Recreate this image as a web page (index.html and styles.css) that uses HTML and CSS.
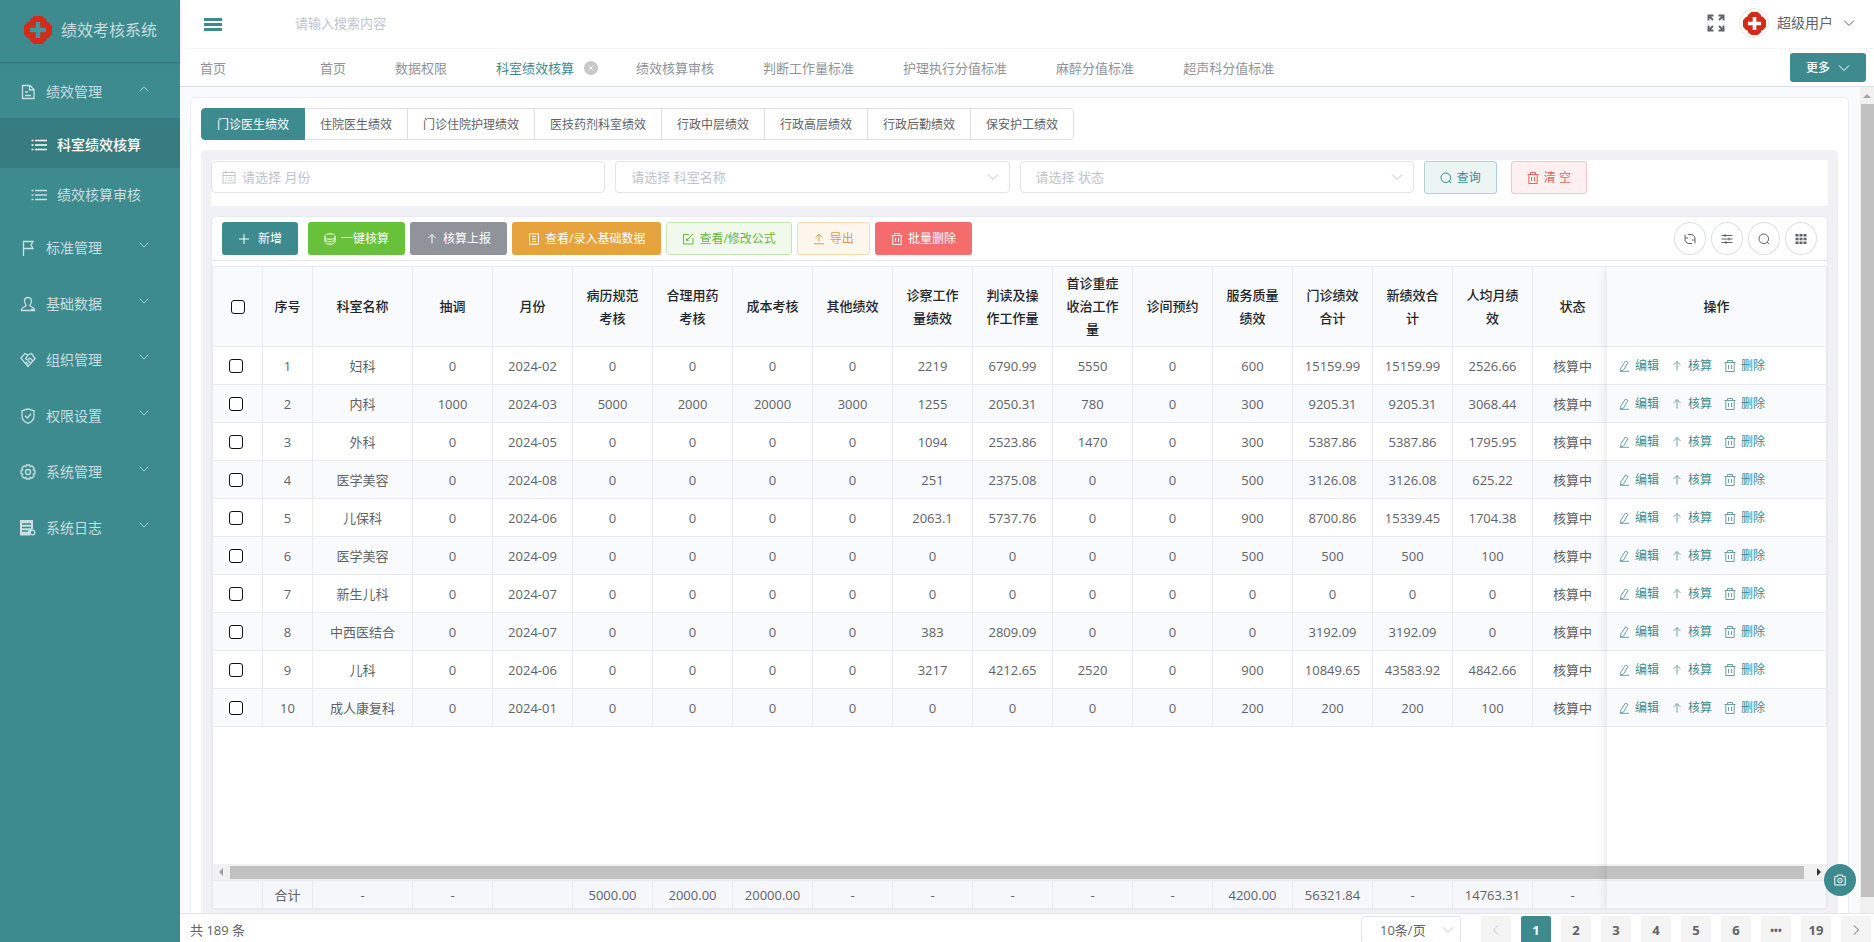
FILE: index.html
```html
<!DOCTYPE html>
<html lang="zh-CN">
<head>
<meta charset="utf-8">
<title>绩效考核系统</title>
<link rel="stylesheet" href="styles.css">
</head>
<body>
<svg class="sprite" aria-hidden="true">
  <symbol id="i-logo" viewBox="0 0 28 28"><path fill="#d42a17" d="M10 0h8l4 3.500.3 2.200 2.200.3L28 10v8l-3.500 4-2.200.3-.3 2.200L18 28h-8l-4-3.500-.3-2.200-2.200-.3L0 18v-8l3.500-4 2.200-.3.3-2.200z"/><path fill="none" stroke="#a8382b" d="M5.500 5.500l4 4M22.500 5.500l-4 4M5.500 22.500l4-4M22.500 22.500l-4-4"/><path class="cross" d="M11.800 6h4.400v5.800H22v4.400h-5.800V22h-4.400v-5.800H6v-4.400h5.800z"/></symbol>
  <symbol id="i-down" viewBox="0 0 12 12"><path d="M1 3.500l5 5 5-5"/></symbol>
  <symbol id="i-up" viewBox="0 0 12 12"><path d="M1 8.500l5-5 5 5"/></symbol>
  <symbol id="i-left" viewBox="0 0 12 12"><path d="M8 1.500L3.500 6 8 10.500"/></symbol>
  <symbol id="i-right" viewBox="0 0 12 12"><path d="M4 1.500L8.500 6 4 10.500"/></symbol>
  <symbol id="i-doc" viewBox="0 0 16 16"><path d="M2.500 1.500h7.500l4 4v9H2.500zM9.500 1.500V6H14M5 8h3M5 11.500h6"/></symbol>
  <symbol id="i-list" viewBox="0 0 16 12"><path d="M4 1.500h12M4 6h12M4 10.500h12M.500 1.500h2M.500 6h2M.500 10.500h2"/></symbol>
  <symbol id="i-flag" viewBox="0 0 16 16"><path d="M3.500 16V1.500H13L11 5l2 3.500H3.500"/></symbol>
  <symbol id="i-user" viewBox="0 0 16 16"><path d="M8 1.500c-2.200 0-3.500 1.500-3.500 3.500 0 1.800 1 2.800 1.500 4 .3 1-.5 1.500-2 2-1.700.6-2.500 1.200-2.500 3.500h13c0-2.300-.8-2.900-2.500-3.500-1.500-.5-2.300-1-2-2 .5-1.200 1.500-2.200 1.500-4 0-2-1.300-3.500-3.500-3.500zM11 13.500h3"/></symbol>
  <symbol id="i-org" viewBox="0 0 16 16"><path d="M8 3L5 1.500.800 6 8 14.500 15.200 6.500 11.500 1.500 8 3 5.500 6.500l2 1.500L10 6l3 3M6 10l2 2M8 8.500l2.500 2.500"/></symbol>
  <symbol id="i-shield" viewBox="0 0 16 16"><path d="M8 .800l6 2V8c0 3.500-2.500 6-6 7.400C4.500 14 2 11.500 2 8V2.800zM5 7.800L7.300 10 11 5.800"/></symbol>
  <symbol id="i-gear" viewBox="0 0 16 16"><path d="M6.500 1h3l.6 1.700 1.800-.8 2.200 2.200-.8 1.800 1.700.6v3l-1.700.6.8 1.800-2.200 2.200-1.800-.8L9.500 15h-3l-.6-1.700-1.800.8-2.200-2.200.8-1.800L1 9.500v-3l1.700-.6-.8-1.800 2.200-2.200 1.800.8z"/><circle cx="8" cy="8" r="2.500"/></symbol>
  <symbol id="i-log" viewBox="0 0 16 16"><path fill="currentColor" stroke="none" d="M0 0h13v9l-3 2v4.500H0z"/><path class="log-lines" d="M2 4h9M2 7.500h9M2 11h6"/><circle cx="12.500" cy="12.500" r="2.300"/></symbol>
  <symbol id="i-full" viewBox="0 0 18 18"><path d="M1.500 6.500v-5h5M2 2l4 4M11.500 1.500h5v5M16 2l-4 4M1.500 11.500v5h5M2 16l4-4M16.500 11.500v5h-5M16 16l-4-4"/></symbol>
  <symbol id="i-cal" viewBox="0 0 14 14"><path d="M1 2.500h12v10.500H1zM1 5.500h12M4 .5v3M10 .5v3M3.500 8h1.500M6.300 8h1.500M9 8h1.500M3.500 10.500h1.500M6.300 10.500h1.500M9 10.500h1.500"/></symbol>
  <symbol id="i-search" viewBox="0 0 12 12"><circle cx="5.800" cy="5.800" r="4.800"/><path d="M9.200 9.200L11 11"/></symbol>
  <symbol id="i-trash" viewBox="0 0 12 12"><path d="M.5 2.500h11M3.500 2.500v-2h5v2M1.800 2.500v9h8.400v-9M4.500 5v4M7.500 5v4"/></symbol>
  <symbol id="i-plus" viewBox="0 0 12 12"><path d="M6 1v10M1 6h10"/></symbol>
  <symbol id="i-coin" viewBox="0 0 12 12"><ellipse cx="6" cy="3.500" rx="5" ry="2.700"/><path d="M1 3.500v5c0 1.500 2 2.700 5 2.700s5-1.200 5-2.700v-5M1 6c0 1.500 2 2.700 5 2.700S11 7.500 11 6"/></symbol>
  <symbol id="i-top" viewBox="0 0 12 12"><path d="M6 10.500v-9M2.500 5L6 1.500 9.500 5"/></symbol>
  <symbol id="i-sheet" viewBox="0 0 12 12"><path d="M1.500.800h9v10.400h-9zM4 3.500h4M4 6h4M4 8.500h4"/></symbol>
  <symbol id="i-edit" viewBox="0 0 12 12"><path d="M7 1.500H1.500v9.500H11V5M4.500 7.500L11 1M4.500 5.500v2h2"/></symbol>
  <symbol id="i-upload" viewBox="0 0 12 12"><path d="M6 8.500V1.500M2.500 4.500L6 1.200l3.500 3.300M1 10.800h10"/></symbol>
  <symbol id="i-pen" viewBox="0 0 12 12"><path d="M7.500 1l2.500 1.500-4.500 7.500-3 1 .3-3zM2 11.300h9"/></symbol>
  <symbol id="i-refresh" viewBox="0 0 12 12"><path d="M4 1.500h3A4 4 0 0 1 10.800 7M8 10.500H5A4 4 0 0 1 1.200 5M1 1.500v3.500h3M11 10.500V7H8"/></symbol>
  <symbol id="i-tune" viewBox="0 0 12 12"><path d="M.5 2.500h11M.5 6h11M.5 9.500h11M4 1v3M8 4.500v3M5 8v3"/></symbol>
  <symbol id="i-grid" viewBox="0 0 12 12"><path fill="currentColor" stroke="none" d="M.5 1h3v2.500h-3zM4.500 1h3v2.500h-3zM8.500 1h3v2.500h-3zM.5 4.700h3v2.500h-3zM4.500 4.700h3v2.500h-3zM8.500 4.700h3v2.500h-3zM.5 8.400h3v2.500h-3zM4.500 8.400h3v2.500h-3zM8.500 8.400h3v2.500h-3z"/></symbol>
  <symbol id="i-camera" viewBox="0 0 12 12"><path d="M.8 2.500h2.700v-1.500h5v1.500h2.700v8.500H.8z"/><circle cx="6" cy="6.500" r="2.300"/><path d="M6 6v1"/></symbol>
</svg>

<div class="app">
  <aside class="sidebar">
    <div class="brand"><svg class="brand-logo"><use href="#i-logo"/></svg><span>绩效考核系统</span></div>
    <nav class="menu">
      <a class="item" href="#"><svg class="ic16"><use href="#i-doc"/></svg><span>绩效管理</span><svg class="arrow"><use href="#i-up"/></svg></a>
      <a class="item sub active" href="#"><svg class="ic16"><use href="#i-list"/></svg><span>科室绩效核算</span></a>
      <a class="item sub" href="#"><svg class="ic16"><use href="#i-list"/></svg><span>绩效核算审核</span></a>
      <a class="item" href="#"><svg class="ic16"><use href="#i-flag"/></svg><span>标准管理</span><svg class="arrow"><use href="#i-down"/></svg></a>
      <a class="item" href="#"><svg class="ic16"><use href="#i-user"/></svg><span>基础数据</span><svg class="arrow"><use href="#i-down"/></svg></a>
      <a class="item" href="#"><svg class="ic16"><use href="#i-org"/></svg><span>组织管理</span><svg class="arrow"><use href="#i-down"/></svg></a>
      <a class="item" href="#"><svg class="ic16"><use href="#i-shield"/></svg><span>权限设置</span><svg class="arrow"><use href="#i-down"/></svg></a>
      <a class="item" href="#"><svg class="ic16"><use href="#i-gear"/></svg><span>系统管理</span><svg class="arrow"><use href="#i-down"/></svg></a>
      <a class="item" href="#"><svg class="ic16"><use href="#i-log"/></svg><span>系统日志</span><svg class="arrow"><use href="#i-down"/></svg></a>
    </nav>
  </aside>

  <div class="main">
    <header class="topbar">
      <button class="burger" aria-label="折叠菜单"><i></i><i></i><i></i></button>
      <input class="top-search" type="text" placeholder="请输入搜索内容" aria-label="搜索">
      <button class="full" aria-label="全屏"><svg><use href="#i-full"/></svg></button>
      <span class="avatar"><svg><use href="#i-logo"/></svg></span>
      <button class="user">超级用户<svg class="ic12"><use href="#i-down"/></svg></button>
    </header>

    <div class="tabbar">
      <nav class="tabs">
        <a class="tab home" href="#">首页</a>
        <a class="tab" href="#">首页</a>
        <a class="tab" href="#">数据权限</a>
        <a class="tab current" href="#">科室绩效核算<svg class="close" viewBox="0 0 14 14"><circle cx="7" cy="7" r="7"/><path d="M4.500 4.500l5 5M9.500 4.500l-5 5"/></svg></a>
        <a class="tab" href="#">绩效核算审核</a>
        <a class="tab" href="#">判断工作量标准</a>
        <a class="tab" href="#">护理执行分值标准</a>
        <a class="tab" href="#">麻醉分值标准</a>
        <a class="tab" href="#">超声科分值标准</a>
      </nav>
      <button class="more">更多<svg class="ic12"><use href="#i-down"/></svg></button>
    </div>

    <div class="scroll">
      <div class="card">
        <div class="segments">
          <button class="seg on">门诊医生绩效</button><button class="seg">住院医生绩效</button><button class="seg">门诊住院护理绩效</button><button class="seg">医技药剂科室绩效</button><button class="seg">行政中层绩效</button><button class="seg">行政高层绩效</button><button class="seg">行政后勤绩效</button><button class="seg">保安护工绩效</button>
        </div>
        <div class="panel">
          <form class="filters">
            <div class="field date"><svg class="cal"><use href="#i-cal"/></svg><input type="text" placeholder="请选择 月份" aria-label="月份"></div>
            <div class="field"><select aria-label="科室名称"><option>请选择 科室名称</option></select><svg class="caret"><use href="#i-down"/></svg></div>
            <div class="field"><select aria-label="状态"><option>请选择 状态</option></select><svg class="caret"><use href="#i-down"/></svg></div>
            <div class="actions">
              <button type="button" class="btn plain-teal"><svg class="ic12"><use href="#i-search"/></svg>查询</button>
              <button type="button" class="btn plain-red"><svg class="ic12"><use href="#i-trash"/></svg>清 空</button>
            </div>
          </form>

          <section class="grid">
            <div class="toolbar">
              <button class="btn teal"><svg class="ic12"><use href="#i-plus"/></svg>新增</button>
              <button class="btn green"><svg class="ic12"><use href="#i-coin"/></svg>一键核算</button>
              <button class="btn gray"><svg class="ic12"><use href="#i-top"/></svg>核算上报</button>
              <button class="btn amber"><svg class="ic12"><use href="#i-sheet"/></svg>查看/录入基础数据</button>
              <button class="btn plain-green"><svg class="ic12"><use href="#i-edit"/></svg>查看/修改公式</button>
              <button class="btn plain-amber"><svg class="ic12"><use href="#i-upload"/></svg>导出</button>
              <button class="btn red"><svg class="ic12"><use href="#i-trash"/></svg>批量删除</button>
              <div class="tools">
                <button class="round" aria-label="刷新"><svg class="ic12"><use href="#i-refresh"/></svg></button>
                <button class="round" aria-label="设置"><svg class="ic12"><use href="#i-tune"/></svg></button>
                <button class="round" aria-label="搜索"><svg class="ic12"><use href="#i-search"/></svg></button>
                <button class="round" aria-label="列"><svg class="ic12"><use href="#i-grid"/></svg></button>
              </div>
            </div>
            <div class="tablebox">
              <div class="rows">
                <table>
                  <colgroup><col class="c50"><col class="c50"><col class="c100"><col span="15" class="c80"><col class="c220"></colgroup>
                  <thead><tr><th><input type="checkbox" aria-label="全选"></th><th>序号</th><th>科室名称</th><th>抽调</th><th>月份</th><th>病历规范考核</th><th>合理用药考核</th><th>成本考核</th><th>其他绩效</th><th>诊察工作量绩效</th><th>判读及操作工作量</th><th>首诊重症收治工作量</th><th>诊间预约</th><th>服务质量绩效</th><th>门诊绩效合计</th><th>新绩效合计</th><th>人均月绩效</th><th>状态</th><th class="ops">操作</th></tr></thead>
                  <tbody>
                    <tr><td><input type="checkbox" aria-label="选择 1"></td><td>1</td><td>妇科</td><td>0</td><td>2024-02</td><td>0</td><td>0</td><td>0</td><td>0</td><td>2219</td><td>6790.99</td><td>5550</td><td>0</td><td>600</td><td>15159.99</td><td>15159.99</td><td>2526.66</td><td>核算中</td><td class="ops"><button><svg class="ic12"><use href="#i-pen"/></svg>编辑</button><button><svg class="ic12"><use href="#i-top"/></svg>核算</button><button><svg class="ic12"><use href="#i-trash"/></svg>删除</button></td></tr>
                    <tr><td><input type="checkbox" aria-label="选择 2"></td><td>2</td><td>内科</td><td>1000</td><td>2024-03</td><td>5000</td><td>2000</td><td>20000</td><td>3000</td><td>1255</td><td>2050.31</td><td>780</td><td>0</td><td>300</td><td>9205.31</td><td>9205.31</td><td>3068.44</td><td>核算中</td><td class="ops"><button><svg class="ic12"><use href="#i-pen"/></svg>编辑</button><button><svg class="ic12"><use href="#i-top"/></svg>核算</button><button><svg class="ic12"><use href="#i-trash"/></svg>删除</button></td></tr>
                    <tr><td><input type="checkbox" aria-label="选择 3"></td><td>3</td><td>外科</td><td>0</td><td>2024-05</td><td>0</td><td>0</td><td>0</td><td>0</td><td>1094</td><td>2523.86</td><td>1470</td><td>0</td><td>300</td><td>5387.86</td><td>5387.86</td><td>1795.95</td><td>核算中</td><td class="ops"><button><svg class="ic12"><use href="#i-pen"/></svg>编辑</button><button><svg class="ic12"><use href="#i-top"/></svg>核算</button><button><svg class="ic12"><use href="#i-trash"/></svg>删除</button></td></tr>
                    <tr><td><input type="checkbox" aria-label="选择 4"></td><td>4</td><td>医学美容</td><td>0</td><td>2024-08</td><td>0</td><td>0</td><td>0</td><td>0</td><td>251</td><td>2375.08</td><td>0</td><td>0</td><td>500</td><td>3126.08</td><td>3126.08</td><td>625.22</td><td>核算中</td><td class="ops"><button><svg class="ic12"><use href="#i-pen"/></svg>编辑</button><button><svg class="ic12"><use href="#i-top"/></svg>核算</button><button><svg class="ic12"><use href="#i-trash"/></svg>删除</button></td></tr>
                    <tr><td><input type="checkbox" aria-label="选择 5"></td><td>5</td><td>儿保科</td><td>0</td><td>2024-06</td><td>0</td><td>0</td><td>0</td><td>0</td><td>2063.1</td><td>5737.76</td><td>0</td><td>0</td><td>900</td><td>8700.86</td><td>15339.45</td><td>1704.38</td><td>核算中</td><td class="ops"><button><svg class="ic12"><use href="#i-pen"/></svg>编辑</button><button><svg class="ic12"><use href="#i-top"/></svg>核算</button><button><svg class="ic12"><use href="#i-trash"/></svg>删除</button></td></tr>
                    <tr><td><input type="checkbox" aria-label="选择 6"></td><td>6</td><td>医学美容</td><td>0</td><td>2024-09</td><td>0</td><td>0</td><td>0</td><td>0</td><td>0</td><td>0</td><td>0</td><td>0</td><td>500</td><td>500</td><td>500</td><td>100</td><td>核算中</td><td class="ops"><button><svg class="ic12"><use href="#i-pen"/></svg>编辑</button><button><svg class="ic12"><use href="#i-top"/></svg>核算</button><button><svg class="ic12"><use href="#i-trash"/></svg>删除</button></td></tr>
                    <tr><td><input type="checkbox" aria-label="选择 7"></td><td>7</td><td>新生儿科</td><td>0</td><td>2024-07</td><td>0</td><td>0</td><td>0</td><td>0</td><td>0</td><td>0</td><td>0</td><td>0</td><td>0</td><td>0</td><td>0</td><td>0</td><td>核算中</td><td class="ops"><button><svg class="ic12"><use href="#i-pen"/></svg>编辑</button><button><svg class="ic12"><use href="#i-top"/></svg>核算</button><button><svg class="ic12"><use href="#i-trash"/></svg>删除</button></td></tr>
                    <tr><td><input type="checkbox" aria-label="选择 8"></td><td>8</td><td>中西医结合</td><td>0</td><td>2024-07</td><td>0</td><td>0</td><td>0</td><td>0</td><td>383</td><td>2809.09</td><td>0</td><td>0</td><td>0</td><td>3192.09</td><td>3192.09</td><td>0</td><td>核算中</td><td class="ops"><button><svg class="ic12"><use href="#i-pen"/></svg>编辑</button><button><svg class="ic12"><use href="#i-top"/></svg>核算</button><button><svg class="ic12"><use href="#i-trash"/></svg>删除</button></td></tr>
                    <tr><td><input type="checkbox" aria-label="选择 9"></td><td>9</td><td>儿科</td><td>0</td><td>2024-06</td><td>0</td><td>0</td><td>0</td><td>0</td><td>3217</td><td>4212.65</td><td>2520</td><td>0</td><td>900</td><td>10849.65</td><td>43583.92</td><td>4842.66</td><td>核算中</td><td class="ops"><button><svg class="ic12"><use href="#i-pen"/></svg>编辑</button><button><svg class="ic12"><use href="#i-top"/></svg>核算</button><button><svg class="ic12"><use href="#i-trash"/></svg>删除</button></td></tr>
                    <tr><td><input type="checkbox" aria-label="选择 10"></td><td>10</td><td>成人康复科</td><td>0</td><td>2024-01</td><td>0</td><td>0</td><td>0</td><td>0</td><td>0</td><td>0</td><td>0</td><td>0</td><td>200</td><td>200</td><td>200</td><td>100</td><td>核算中</td><td class="ops"><button><svg class="ic12"><use href="#i-pen"/></svg>编辑</button><button><svg class="ic12"><use href="#i-top"/></svg>核算</button><button><svg class="ic12"><use href="#i-trash"/></svg>删除</button></td></tr>
                  </tbody>
                </table>
              </div>
              <div class="hbar"><i class="tri-left"></i><span></span><i class="tri-right"></i></div>
              <div class="sum">
                <table>
                  <colgroup><col class="c50"><col class="c50"><col class="c100"><col span="15" class="c80"><col class="c220"></colgroup>
                  <tbody><tr><td></td><td>合计</td><td>-</td><td>-</td><td></td><td>5000.00</td><td>2000.00</td><td>20000.00</td><td>-</td><td>-</td><td>-</td><td>-</td><td>-</td><td>4200.00</td><td>56321.84</td><td>-</td><td>14763.31</td><td>-</td><td class="ops"></td></tr></tbody>
                </table>
              </div>
              <div class="pin-shadow"></div>
            </div>
          </section>
        </div>
      </div>
      <div class="vbar"><i></i><span></span></div>
      <button class="snap" aria-label="截图"><svg class="ic12"><use href="#i-camera"/></svg></button>
    </div>

    <footer class="pager">
      <span class="total">共 189 条</span>
      <div class="size"><select aria-label="每页条数"><option>10条/页</option></select><svg class="caret"><use href="#i-down"/></svg></div>
      <div class="pages">
        <button class="dim" aria-label="上一页"><svg class="ic12"><use href="#i-left"/></svg></button><button class="on">1</button><button>2</button><button>3</button><button>4</button><button>5</button><button>6</button><button class="dots">•••</button><button>19</button><button aria-label="下一页"><svg class="ic12"><use href="#i-right"/></svg></button>
      </div>
    </footer>
  </div>
</div>
</body>
</html>
```
FILE: styles.css
```css
:root {
  --teal: #3d8b8f;
  --line: #e8eaf2;
  --text: #606266;
  --hint: #c0c4cc;
}
* { box-sizing: border-box; }
body {
  margin: 0;
  background: #fff;
  color: var(--text);
  font: 13px/20px "Open Sans", "Noto Sans", "Noto Sans CJK SC", sans-serif;
}
button, input, select { font: inherit; color: inherit; margin: 0; }
button { padding: 0; border: 0; background: none; cursor: pointer; white-space: nowrap; }
a { color: inherit; text-decoration: none; }
svg { flex: none; display: block; fill: none; stroke: currentColor; stroke-width: 1; overflow: visible; }
.sprite { position: absolute; width: 0; height: 0; }
.ic12 { width: 12px; height: 12px; }
.ic16 { width: 16px; height: 16px; stroke-width: 1.3; }

.app { display: flex; height: 100vh; overflow: hidden; }

/* sidebar */
.sidebar { flex: none; width: 180px; background: var(--teal); color: rgba(255, 255, 255, .72); }
.brand {
  display: flex; align-items: center; gap: 9px; height: 62px; padding: 0 0 2px 24px;
  font-size: 16px; box-shadow: 0 1px 2px rgba(0, 0, 0, .2);
}
.brand-logo { width: 28px; height: 28px; stroke: none; --cross: #3d9a9c; }
.cross { fill: var(--cross); stroke: none; }
.log-lines { stroke: var(--teal); }
.item {
  display: flex; align-items: center; height: 56px; padding: 4px 31px 0 20px;
  font-size: 14px;
}
.item span { flex: 1; margin-left: 10px; }
.item .arrow { width: 10px; height: 10px; margin-bottom: 6px; }
.item.sub { height: 50px; padding-left: 31px; padding-right: 0; }
.item.active { background: #377c80; color: #fff; font-weight: 500; }

/* header */
.main { flex: 1; min-width: 0; display: flex; flex-direction: column; }
.topbar { flex: none; display: flex; align-items: center; height: 49px; padding: 0 19px 2px 24px; border-bottom: 1px solid #f4f4f6; }
.burger { width: 18px; display: grid; gap: 2px; padding-top: 2px; }
.burger i { height: 3px; background: var(--teal); }
.top-search { flex: 1; min-width: 0; height: 32px; margin-left: 57px; padding: 0 16px; border: 0; background: none; outline: 0; }
::placeholder { color: var(--hint); opacity: 1; }
.full svg { width: 18px; height: 18px; stroke-width: 2; color: #606368; }
.avatar {
  display: grid; place-items: center; width: 30px; height: 30px; margin: 0 8px 0 14px;
  border: 1px solid #e8e8ea; border-radius: 50%; --cross: #fff;
}
.avatar svg { width: 23px; height: 23px; stroke: none; }
.user { display: flex; align-items: center; gap: 10px; font-size: 14px; }

/* page tabs */
.tabbar { flex: none; display: flex; align-items: center; justify-content: space-between; height: 38px; padding: 0 8px 0 20px; border-bottom: 1px solid #dcdfe6; color: #909399; }
.tabs { display: flex; gap: 49px; }
.tab { display: flex; align-items: center; white-space: nowrap; }
.tab.home { margin-right: 45px; }
.tab.current { color: var(--teal); gap: 10px; margin-right: -11px; }
.close { width: 14px; height: 14px; fill: #c8c8c8; stroke: none; }
.close path { stroke: #fff; }
.more { display: flex; align-items: center; gap: 8px; height: 29px; padding: 0 16px; border-radius: 3px; background: var(--teal); color: #fff; font-size: 12px; font-weight: 500; }

/* content */
.scroll { flex: 1; min-height: 0; position: relative; display: flex; overflow: hidden; background: #f9fafc; }
.card {
  flex: 1; min-width: 0; display: flex; flex-direction: column;
  margin: 10px 11px 0 10px; padding: 10px 10px 0; background: #fff;
  border: 1px solid #ebedf0; border-bottom: 0; border-radius: 5px 5px 0 0;
}
.segments { display: flex; }
.seg { height: 32px; padding: 1px 15px 0; border: 1px solid #dcdfe6; margin-right: -1px; font-size: 12px; background: #fff; }
.seg:first-child { border-radius: 4px 0 0 4px; }
.seg:last-child { border-radius: 0 4px 4px 0; }
.seg.on { position: relative; background: var(--teal); border-color: var(--teal); color: #fff; }
.panel { flex: 1; min-height: 0; display: flex; flex-direction: column; margin-top: 10px; padding: 10px 10px 3px; background: #f0f0f5; border-radius: 5px 5px 0 0; }

.filters { display: grid; grid-template-columns: repeat(4, 1fr); padding: 1px 0 12px; background: #fff; }
.field { position: relative; padding-right: 10px; }
.field input, .field select, .size select {
  width: 100%; height: 32px; padding: 0 15px; border: 1px solid #e0e3ea; border-radius: 4px;
  background: #fff; appearance: none; outline: 0; color: var(--hint);
}
.field.date input { padding-left: 30px; }
.cal { position: absolute; left: 11px; top: 9px; width: 14px; height: 14px; color: var(--hint); }
.caret { position: absolute; right: 21px; top: 10px; width: 12px; height: 12px; color: var(--hint); }
.actions { display: flex; gap: 14px; }

.btn { display: flex; align-items: center; gap: 5px; height: 33px; padding: 0 15px; border: 1px solid transparent; border-radius: 3px; font-size: 12px; color: #fff; }
.teal { background: var(--teal); gap: 8px; margin-right: 5px; }
.green { background: #67c23a; }
.gray { background: #909399; }
.amber { background: #e6a23c; }
.red { background: #f56c6c; }
.plain-green { background: #f0f9eb; border-color: #c2e7b0; color: #67b840; }
.plain-amber { background: #fdf6ec; border-color: #f5dab1; color: #dc9b50; }
.plain-teal { background: #ecf4f4; border-color: #b1d1d2; color: var(--teal); }
.plain-red { background: #fef0f0; border-color: #f3c6c6; color: #e06666; }

.grid { flex: 1; min-height: 0; display: flex; flex-direction: column; margin-top: 10px; background: #fff; border: 1px solid var(--line); border-radius: 4px; }
.toolbar { display: flex; gap: 5px; padding: 5px 10px; border-bottom: 1px solid #e4e6ec; }
.tools { display: flex; gap: 5px; margin-left: auto; }
.round { display: grid; place-items: center; width: 32px; height: 33px; border: 1px solid #dcdfe6; border-radius: 50%; }

/* data table */
.tablebox { flex: 1; min-height: 0; position: relative; display: flex; flex-direction: column; margin-top: 5px; overflow: hidden; border: solid var(--line); border-width: 1px 0 0 1px; }
.rows { flex: 1; min-height: 0; overflow: hidden; }
table { width: 100%; min-width: 1620px; table-layout: fixed; border-collapse: separate; border-spacing: 0; }
.c50 { width: 50px; }
.c80 { width: 80px; }
.c100 { width: 100px; }
.c220 { width: 220px; }
th, td { height: 38px; padding: 0 10px; border: solid var(--line); border-width: 0 1px 1px 0; text-align: center; background: #fff; }
th { height: 80px; background: #f9fafc; color: #222428; font-weight: 500; line-height: 23px; }
tr:nth-child(even) td { background: #f9fafc; }
.ops { position: sticky; right: 0; }
td.ops { padding-left: 11px; text-align: left; white-space: nowrap; }
.ops button { display: inline-flex; align-items: center; gap: 5px; margin-right: 12px; color: var(--teal); font-size: 12px; vertical-align: middle; }
.ops svg { color: #6f9fa3; }
input[type="checkbox"] { appearance: none; display: block; width: 14px; height: 14px; margin: 0 auto 0 6px; border: 1px solid #111; border-radius: 3px; background: #fff; }
th input[type="checkbox"] { margin-left: 8px; }
.sum { flex: none; overflow: hidden; border-top: 1px solid var(--line); }
.sum td { height: 28px; background: #f5f7fb; }
.pin-shadow { position: absolute; top: 0; right: 0; bottom: 0; width: 220px; box-shadow: 0 0 10px rgba(0, 0, 0, .12); pointer-events: none; }

/* scroll tracks */
.hbar { flex: none; display: flex; align-items: center; height: 16px; padding: 0 6px; background: #f1f1f1; }
.hbar span { flex: 1; height: 13px; margin: 0 13px 0 7px; background: #c1c1c1; }
.tri-left, .tri-right { border: 4px solid transparent; }
.tri-left { border-left: 0; border-right-color: #a3a3a3; }
.tri-right { border-right: 0; border-left-color: #333; }
.vbar { flex: none; width: 14px; display: flex; flex-direction: column; align-items: flex-end; padding: 7px 0 16px; background: #f1f1f1; }
.vbar i { margin-right: 3px; border: 4px solid transparent; border-top: 0; border-bottom-color: #a3a3a3; }
.vbar span { flex: 1; width: 13px; margin-top: 6px; background: #c1c1c1; }
.snap { position: absolute; right: 18px; bottom: 17px; width: 32px; height: 32px; display: grid; place-items: center; border-radius: 50%; background: var(--teal); color: #fff; }

/* pagination */
.pager { flex: none; display: flex; align-items: flex-start; height: 29px; padding: 2px 3px 0 10px; overflow: hidden; border-top: 1px solid #e4e6ec; }
.total { flex: 1; padding-top: 4px; }
.size { position: relative; width: 100px; margin-right: 20px; }
.size select { height: 28px; padding: 0 18px; color: var(--text); }
.size .caret { right: 7px; top: 8px; }
.pages { display: flex; gap: 10px; }
.pages button { display: grid; place-items: center; width: 30px; height: 28px; border-radius: 2px; background: #f4f4f5; font-weight: 700; }
.pages .on { background: var(--teal); color: #fff; }
.pages .dim { color: var(--hint); }
.pages .dots { font-size: 10px; }
```
